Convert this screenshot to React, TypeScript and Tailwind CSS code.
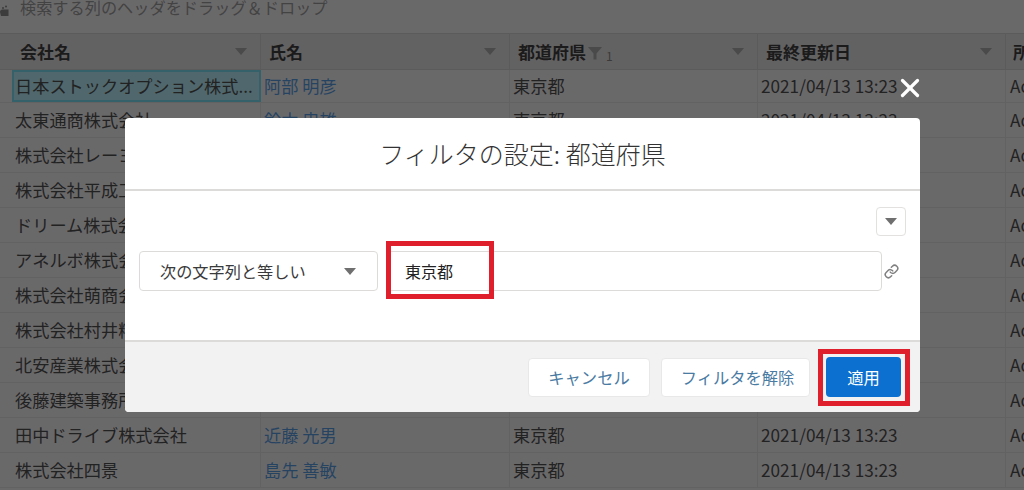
import React from "react";
import { Link, X } from "lucide-react";

const font = { fontFamily: '"Noto Sans CJK JP", "Noto Sans", sans-serif' };

const rows = [
  ["日本ストックオプション株式...", "阿部 明彦"],
  ["太東通商株式会社", "鈴木 忠雄"],
  ["株式会社レーヨン", "佐藤 健一"],
  ["株式会社平成工業", "高橋 誠"],
  ["ドリーム株式会社", "田中 実"],
  ["アネルボ株式会社", "伊藤 浩"],
  ["株式会社萌商会", "渡辺 隆"],
  ["株式会社村井精機", "山本 修"],
  ["北安産業株式会社", "中村 勇"],
  ["後藤建築事務所", "小林 進"],
  ["田中ドライブ株式会社", "近藤 光男"],
  ["株式会社四景", "島先 善敏"],
];

const Caret = ({ className }: { className: string }) => (
  <span
    className={`inline-block w-0 h-0 border-x-[6px] border-x-transparent border-t-[7px] ${className}`}
  ></span>
);

const HeaderCell = ({ children, w }: { children: React.ReactNode; w: string }) => (
  <div
    className={`${w} shrink-0 h-full flex items-center justify-between pl-[8px] pr-[13px] border-r border-[#5c5b5c] text-[17px] font-bold text-[#1b1b1b]`}
  >
    <div className="flex items-center">{children}</div>
    <Caret className="border-t-[#4a4a4a]" />
  </div>
);

const App = () => {
  return (
    <div
      className="relative w-[1024px] h-[490px] overflow-hidden bg-[#6a696a] text-[#222222]"
      style={font}
    >
      {/* grid behind the dialog */}
      <div className="h-[33px] flex items-start text-[16.2px] leading-[15px] text-[#434343] whitespace-nowrap">
        <svg width="9" height="12" viewBox="0 0 9 12" className="mt-[5px] mr-[11px]">
          <circle cx="6" cy="1.5" r="1" fill="#3c3c3c" />
          <circle cx="3" cy="3" r="1" fill="#3c3c3c" />
          <path d="M0 7c0-1.500 1-2.500 2.500-2.500H8.500V11H1z" fill="#3c3c3c" />
        </svg>
        検索する列のヘッダをドラッグ＆ドロップ
      </div>
      <div className="flex h-[37px] pl-[12px] bg-[#636263] border-y border-[#5c5b5c]">
        <HeaderCell w="w-[249px]">会社名</HeaderCell>
        <HeaderCell w="w-[249px]">氏名</HeaderCell>
        <HeaderCell w="w-[248px]">
          都道府県
          <svg width="14" height="14" viewBox="0 0 14 14" className="mt-[2px] ml-[2px]">
            <path d="M0 1h14L8.500 7.500V13.500h-3V7.500z" fill="#4a4a4a" />
          </svg>
          <span className="text-[12px] font-normal ml-[4px] mt-[8px] text-[#3a3a3a]">1</span>
        </HeaderCell>
        <HeaderCell w="w-[248px]">最終更新日</HeaderCell>
        <div className="pl-[7px] flex items-center text-[17px] font-bold text-[#1b1b1b]">所</div>
      </div>
      {rows.map((r, i) => (
        <div
          key={i}
          className={`flex pl-[12px] border-b border-[#636263] text-[17.2px] ${i === 0 ? "h-[33px]" : "h-[35px]"}`}
        >
          <div
            className={`w-[249px] shrink-0 flex items-center whitespace-nowrap overflow-hidden ${
              i === 0 ? "pl-[1px] bg-[#50686d] border-2 border-[#35626a]" : "pl-[3px] border-r border-[#636263]"
            }`}
          >
            {r[0]}
          </div>
          <div className="w-[249px] shrink-0 flex items-center pl-[3px] text-[#264462] border-r border-[#636263]">
            {r[1]}
          </div>
          <div className="w-[248px] shrink-0 flex items-center pl-[3px] border-r border-[#636263]">
            東京都
          </div>
          <div className="w-[248px] shrink-0 flex items-center pl-[3px] border-r border-[#636263]">
            2021/04/13 13:23
          </div>
          <div className="flex items-center pl-[4px]">Ac</div>
        </div>
      ))}

      {/* dialog */}
      <X
        className="absolute left-[895px] top-[73px] text-white"
        size={30}
        strokeWidth={2.6}
      />
      <div className="absolute left-[125px] top-[118px] w-[795px] h-[294px] rounded-[4px] overflow-hidden bg-white flex flex-col">
        <div className="h-[73px] shrink-0 flex items-center justify-center border-b-2 border-[#dddbda] text-[25px] font-light text-[#333]">
          フィルタの設定: 都道府県
        </div>
        <div className="flex-1 flex flex-col pt-[16px] pl-[14px] pr-[14px]">
          <div className="flex justify-end">
            <button className="w-[30px] h-[29px] rounded-[4px] border border-[#e3e1e0] flex items-center justify-center">
              <Caret className="border-t-[#6f6f6f]" />
            </button>
          </div>
          <div className="flex items-center mt-[15px] gap-[8px]">
            <div className="w-[239px] h-[40px] rounded-[4px] border border-[#dddbda] flex items-center justify-between pl-[20px] pr-[21px] text-[16.2px] text-[#3a3a3a]">
              次の文字列と等しい
              <Caret className="border-t-[#6f6f6f]" />
            </div>
            <div className="relative w-[496px] h-[40px] rounded-[4px] border border-[#dddbda] flex items-center pl-[18px] text-[16px] text-[#222]">
              東京都
              <div className="absolute -left-[1px] -top-[11px] w-[108px] h-[58px] border-[5px] border-[#e01f2d]"></div>
            </div>
            <Link size={15} strokeWidth={2.4} className="-ml-[6px] text-[#808080]" />
          </div>
        </div>
        <div className="h-[72px] shrink-0 bg-[#f3f2f2] border-t-2 border-[#dddbda] flex items-center justify-end pr-[19px] text-[16.3px]">
          <button className="w-[122px] h-[39px] rounded-[4px] bg-white border border-[#e9e8e8] text-[#4a7ba3]">
            キャンセル
          </button>
          <button className="ml-[11px] w-[149px] h-[39px] rounded-[4px] bg-white border border-[#e9e8e8] pl-[4px] text-[#4a7ba3]">
            フィルタを解除
          </button>
          <div className="relative ml-[16px]">
            <button className="block w-[75px] h-[40px] rounded-[4px] bg-[#0b70cf] text-white">適用</button>
            <div className="absolute -left-[8px] -top-[8px] w-[92px] h-[57px] border-[5px] border-[#e01f2d]"></div>
          </div>
        </div>
      </div>
    </div>
  );
};

export default App;
